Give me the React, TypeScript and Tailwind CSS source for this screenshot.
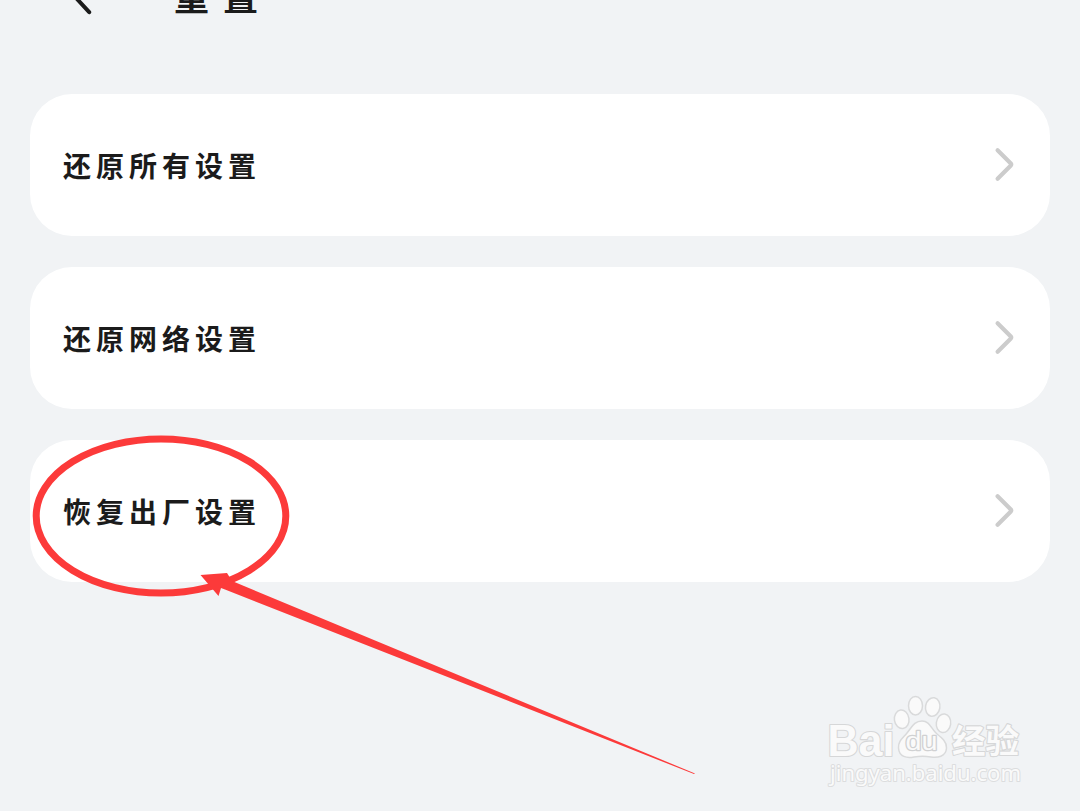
const items = [
  { id: 'all', label: '还原所有设置' },
  { id: 'network', label: '还原网络设置' },
  { id: 'factory', label: '恢复出厂设置' },
]

function BackIcon() {
  return (
    <svg className="h-[50px] w-[30px]" viewBox="0 0 30 50" fill="none" stroke="#1b1b1b" strokeWidth={4} strokeLinecap="round" strokeLinejoin="round">
      <path d="M27.2 9L10 28.5L27.2 47.2" />
    </svg>
  )
}

function ChevronIcon() {
  return (
    <svg className="h-[36px] w-[22px]" viewBox="0 0 22 36" fill="none" stroke="#cccccc" strokeWidth={4.2} strokeLinecap="round" strokeLinejoin="round">
      <path d="M3.6 3.3L16.6 16.2Q17.8 17.5 16.6 18.8L3.6 31.8" />
    </svg>
  )
}

// Red circle and arrow drawn over the last card
function Annotation() {
  return (
    <svg className="pointer-events-none absolute left-0 top-0 h-[811px] w-[1080px]" viewBox="0 0 1080 811">
      <ellipse cx="161" cy="516" rx="124.8" ry="77" fill="none" stroke="#fc3a3a" strokeWidth={7} />
      <path d="M200.5 575L227 573L232 581L695 773.5L694 774L225 589.5L221 588L218.5 596Z" fill="#fc3a3a" />
    </svg>
  )
}

function Watermark() {
  return (
    <svg className="pointer-events-none absolute left-[820px] top-[690px] h-[110px] w-[220px]" viewBox="820 690 220 110">
      <g fill="#fafafa" stroke="#d9dadb" strokeWidth={1.5} strokeLinejoin="round">
        <ellipse cx="901.7" cy="719.3" rx="7.3" ry="9.3" transform="rotate(-8 901.7 719.3)" />
        <ellipse cx="915.5" cy="705.7" rx="7" ry="9.3" />
        <ellipse cx="932.7" cy="707" rx="7.2" ry="9.3" transform="rotate(10 932.7 707)" />
        <ellipse cx="943.5" cy="723.3" rx="7.2" ry="9.3" transform="rotate(8 943.5 723.3)" />
        <path d="M922 721C930 721 931 729 937 734C942 738 947 742 946.5 748C946 757 937 758 931 757C925 756 920 756 914 757C907 758.5 899 757 898.5 748C898 741 903 738 907 733C912 727 914 721 922 721Z" />
      </g>
      <g fill="#fafafa" strokeLinejoin="round" paintOrder="stroke">
        <text x="827.5" y="755.5" textLength="67" lengthAdjust="spacingAndGlyphs" stroke="#d6d7d8" strokeWidth={2.2} className="font-['Liberation_Sans',sans-serif] text-[44px] font-bold">Bai</text>
        <text x="905.5" y="749.5" textLength="32" lengthAdjust="spacingAndGlyphs" stroke="#d0d1d2" strokeWidth={2.4} className="font-['Liberation_Sans',sans-serif] text-[25px]">du</text>
        <text x="952" y="752.5" textLength="67" lengthAdjust="spacingAndGlyphs" stroke="#d6d7d8" strokeWidth={2.2} className="font-['Noto_Sans_CJK_SC',sans-serif] text-[33px] font-bold">经验</text>
        <text x="830" y="781" textLength="191" lengthAdjust="spacingAndGlyphs" stroke="#dcddde" strokeWidth={2} className="font-['Noto_Sans',sans-serif] text-[22px]">jingyan.baidu.com</text>
      </g>
    </svg>
  )
}

export default function App() {
  return (
    <div className="relative h-[811px] w-[1080px] overflow-hidden bg-[#f1f3f5] font-['Noto_Sans_CJK_SC',sans-serif] text-[#1b1b1b]">
      <header className="flex h-[94px] items-start pl-[62px]">
        <div className="-mt-[35px]">
          <BackIcon />
        </div>
        <h1 className="-mt-[26px] ml-[82px] text-[35px] font-bold leading-[44px] tracking-[14px]">重置</h1>
      </header>

      <main className="flex flex-col gap-[31px] px-[30px]">
        {items.map((item) => (
          <button key={item.id} className="flex h-[142px] items-center justify-between rounded-[42px] bg-white pl-[33px] pr-[34px] text-left">
            <span className="text-[28px] font-bold leading-10 tracking-[5px]">{item.label}</span>
            <ChevronIcon />
          </button>
        ))}
      </main>

      <Annotation />
      <Watermark />
    </div>
  )
}
